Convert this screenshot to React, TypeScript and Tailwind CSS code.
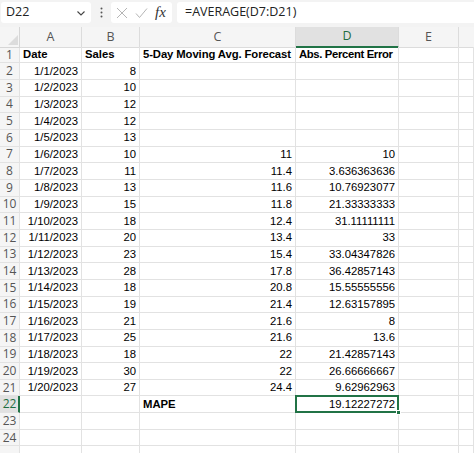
import React from 'react';

const FONT = { fontFamily: '"Liberation Sans", Arial, sans-serif' };
const UI_FONT = { fontFamily: '"Open Sans", "Noto Sans", sans-serif' };

type Row = [string, string, string, string];

const data: Row[] = [
  ['1/1/2023', '8', '', ''],
  ['1/2/2023', '10', '', ''],
  ['1/3/2023', '12', '', ''],
  ['1/4/2023', '12', '', ''],
  ['1/5/2023', '13', '', ''],
  ['1/6/2023', '10', '11', '10'],
  ['1/7/2023', '11', '11.4', '3.636363636'],
  ['1/8/2023', '13', '11.6', '10.76923077'],
  ['1/9/2023', '15', '11.8', '21.33333333'],
  ['1/10/2023', '18', '12.4', '31.11111111'],
  ['1/11/2023', '20', '13.4', '33'],
  ['1/12/2023', '23', '15.4', '33.04347826'],
  ['1/13/2023', '28', '17.8', '36.42857143'],
  ['1/14/2023', '18', '20.8', '15.55555556'],
  ['1/15/2023', '19', '21.4', '12.63157895'],
  ['1/16/2023', '21', '21.6', '8'],
  ['1/17/2023', '25', '21.6', '13.6'],
  ['1/18/2023', '18', '22', '21.42857143'],
  ['1/19/2023', '30', '22', '26.66666667'],
  ['1/20/2023', '27', '24.4', '9.62962963'],
];

const cols = 'grid-cols-[20px_62px_58px_156px_103px_60px_1fr]';
const cell = 'border-r border-b border-[#e2e2e2] px-[3px] flex items-center whitespace-nowrap overflow-hidden';

function RowHead({ n, active }: { n?: number; active?: boolean }) {
  return (
    <div
      className={`flex items-center pl-[2px] text-[12px] border-b ${
        active
          ? 'text-[#1e6e42] border-r-2 border-r-[#217346] border-b-[#e2e2e2] bg-[#e1e1e1]'
          : 'text-[#555] border-r border-[#e2e2e2] bg-[#f5f5f5]'
      }`}
      style={UI_FONT}
    >
      <span className="w-[15px] text-center">{n}</span>
    </div>
  );
}

function EmptyRow({ n }: { n?: number }) {
  return (
    <>
      <RowHead n={n} />
      <div className={cell} />
      <div className={cell} />
      <div className={cell} />
      <div className={cell} />
      <div className={cell} />
      <div className={cell} />
    </>
  );
}

export default function App() {
  return (
    <div className="w-[474px] h-[453px] overflow-hidden bg-white" style={FONT}>
      {/* formula bar */}
      <div className="h-[27px] bg-[#f3f3f3] flex items-start pt-[2px] text-[13px]" style={UI_FONT}>
        <div className="w-[90px] h-[21px] bg-white rounded-[3px] ml-[1px] flex items-center pl-[5px] pr-[4px] justify-between text-[#222]">
          <span className="text-[12.5px]">D22</span>
          <svg width="10" height="10" viewBox="0 0 10 10" className="mr-[1px]">
            <path d="M1.5 3.5 L5 7 L8.5 3.5" fill="none" stroke="#444" strokeWidth="1.1" />
          </svg>
        </div>
        <div className="w-[20px] h-[21px] flex items-center justify-center">
          <svg width="3" height="11" viewBox="0 0 3 11">
            <circle cx="1.5" cy="1.5" r="1" fill="#555" />
            <circle cx="1.5" cy="5.5" r="1" fill="#555" />
            <circle cx="1.5" cy="9.5" r="1" fill="#555" />
          </svg>
        </div>
        <div className="w-[61px] h-[21px] bg-white rounded-[3px] flex items-center pl-[5px] gap-[7px]">
          <svg width="12" height="12" viewBox="0 0 12 12">
            <path d="M1 1 L11 11 M11 1 L1 11" stroke="#b5b5b5" strokeWidth="1" fill="none" />
          </svg>
          <svg width="13" height="12" viewBox="0 0 13 12">
            <path d="M1 6.5 L4.5 10.5 L12 1.5" stroke="#b5b5b5" strokeWidth="1" fill="none" />
          </svg>
          <span
            className="italic text-[15px] text-[#333] leading-none"
            style={{ fontFamily: '"Liberation Serif", "DejaVu Serif", serif' }}
          >
            fx
          </span>
        </div>
        <div className="flex-1 h-[21px] bg-white rounded-l-[3px] ml-[5px] flex items-center pl-[8px] text-[12.5px] text-[#222]">
          =AVERAGE(D7:D21)
        </div>
      </div>

      {/* column headers */}
      <div className={`grid ${cols} h-[19.7px] text-[12.5px] text-[#555] bg-[#f5f5f5]`} style={UI_FONT}>
        <div className="relative border-r border-b border-[#d6d6d6]">
          <svg width="10" height="10" viewBox="0 0 10 10" className="absolute right-[1px] bottom-[2px]">
            <path d="M10 0 L10 10 L0 10 Z" fill="#dcdcdc" />
          </svg>
        </div>
        <div className="flex items-center justify-center border-r border-b border-[#dcdcdc]">A</div>
        <div className="flex items-center justify-center border-r border-b border-[#dcdcdc]">B</div>
        <div className="flex items-center justify-center border-r border-b border-[#dcdcdc]">C</div>
        <div className="flex items-center justify-center border-r border-[#dcdcdc] border-b-2 border-b-[#217346] bg-[#e1e1e1] text-[#1e6e42]">
          D
        </div>
        <div className="flex items-center justify-center border-r border-b border-[#dcdcdc]">E</div>
        <div className="border-b border-[#dcdcdc]" />
      </div>

      {/* cells */}
      <div className={`grid ${cols} auto-rows-[16.67px] text-[11.3px] text-black`}>
        <RowHead n={1} />
        <div className={`${cell} font-bold`}>Date</div>
        <div className={`${cell} font-bold`}>Sales</div>
        <div className={`${cell} font-bold tracking-[-0.1px]`}>5-Day Moving Avg. Forecast</div>
        <div className={`${cell} font-bold tracking-[-0.35px]`}>Abs. Percent Error</div>
        <div className={cell} />
        <div className={cell} />

        {data.map((r, i) => (
          <React.Fragment key={i}>
            <RowHead n={i + 2} />
            <div className={`${cell} justify-end`}>{r[0]}</div>
            <div className={`${cell} justify-end`}>{r[1]}</div>
            <div className={`${cell} justify-end`}>{r[2]}</div>
            <div className={`${cell} justify-end`}>{r[3]}</div>
            <div className={cell} />
            <div className={cell} />
          </React.Fragment>
        ))}

        <RowHead n={22} active />
        <div className={cell} />
        <div className={cell} />
        <div className={`${cell} font-bold`}>MAPE</div>
        <div className={`${cell} justify-end relative overflow-visible`}>
          19.12227272
          <div className="absolute -left-[1px] -top-[1px] right-[-1px] bottom-[-1px] border-2 border-[#217346] pointer-events-none" />
          <div className="absolute right-[-3px] bottom-[-3px] w-[5px] h-[5px] bg-[#217346] border border-white" />
        </div>
        <div className={cell} />
        <div className={cell} />

        <EmptyRow n={23} />
        <EmptyRow n={24} />
        <EmptyRow />
      </div>
    </div>
  );
}
